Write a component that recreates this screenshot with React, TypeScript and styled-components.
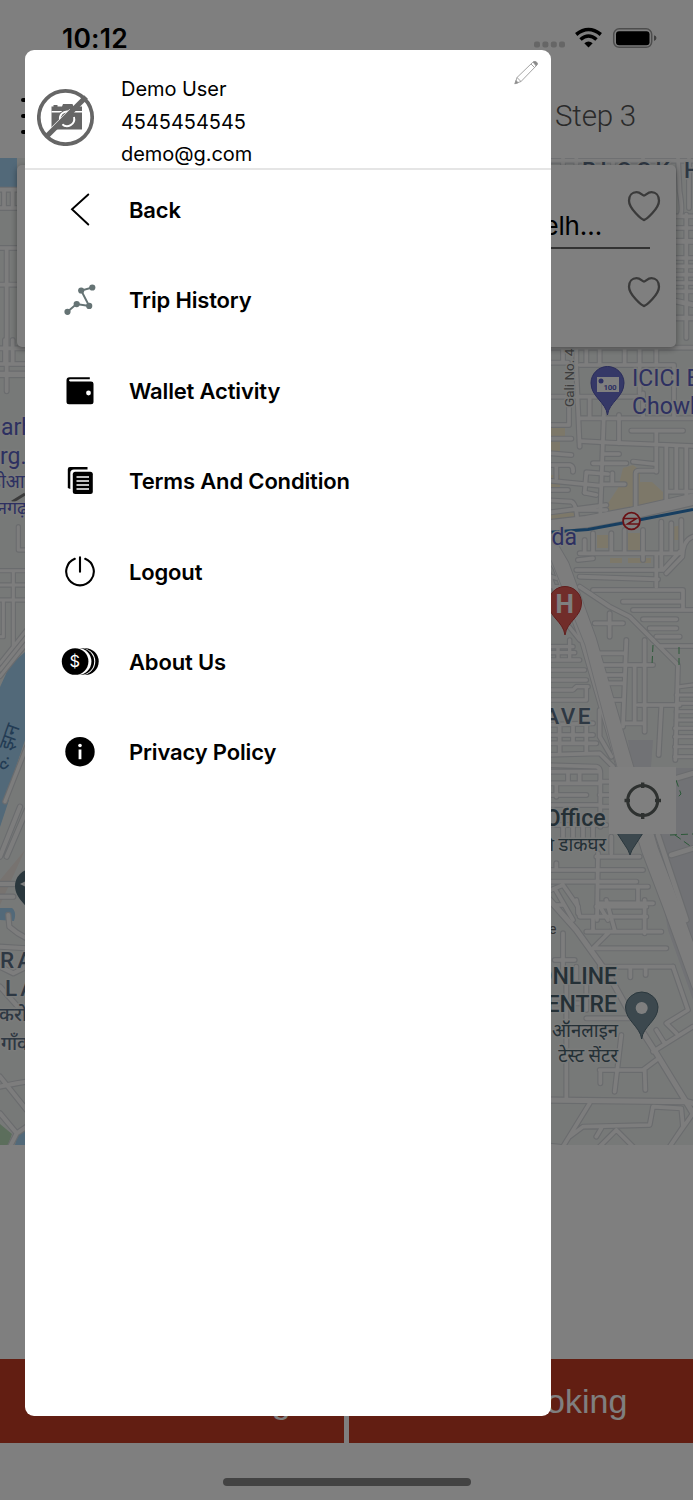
import React, { useState } from 'react';
import styled, { createGlobalStyle } from 'styled-components';

const GlobalStyle = createGlobalStyle`
  * {
    box-sizing: border-box;
  }

  body {
    margin: 0;
    background: #fff;
    font-family: Inter, 'Noto Sans', sans-serif;
  }
`;

const Screen = styled.div`
  position: relative;
  width: 693px;
  height: 1500px;
  display: flex;
  flex-direction: column;
  overflow: hidden;
  background: #fff;
`;

const StatusBar = styled.div`
  height: 75px;
  padding: 0 36px 0 62px;
  display: flex;
  align-items: center;
  justify-content: space-between;
  flex-shrink: 0;
`;

const Clock = styled.div`
  padding-top: 1px;
  font-size: 26.5px;
  font-weight: 600;
  line-height: 30px;
  letter-spacing: 0.2px;
  color: #000;
`;

const TopBar = styled.div`
  height: 82px;
  margin-bottom: 1px;
  padding: 0 57px 0 21px;
  display: flex;
  align-items: center;
  justify-content: space-between;
  flex-shrink: 0;
`;

const MenuButton = styled.button`
  width: 38px;
  height: 36px;
  padding: 0;
  border: none;
  background: none;
  display: flex;
  flex-direction: column;
  justify-content: space-between;

  span {
    width: 38px;
    height: 4px;
    border-radius: 2px;
    background: #000;
  }
`;

const StepTitle = styled.div`
  font-family: Roboto, sans-serif;
  font-size: 29.5px;
  font-weight: 300;
  letter-spacing: -0.2px;
  color: #555;
`;

const MapArea = styled.div`
  position: relative;
  height: 987px;
  flex-shrink: 0;

  > svg {
    display: block;
  }
`;

const LocationCard = styled.div`
  position: absolute;
  top: 7px;
  left: 17px;
  width: 659px;
  height: 182px;
  padding: 0 15px 0 24px;
  border-radius: 5px;
  background: #fff;
  box-shadow: 0 2px 6px rgba(0, 0, 0, 0.4);
`;

const LocationRow = styled.div<{ $line?: boolean }>`
  height: ${(p) => (p.$line ? '84px' : '89px')};
  display: flex;
  align-items: center;
  justify-content: space-between;
`;

const LocationField = styled.div<{ $line?: boolean }>`
  width: 610px;
  height: 100%;
  display: flex;
  align-items: flex-end;
  justify-content: flex-end;
  padding: 0 48px 6px 0;
  border-bottom: ${(p) => (p.$line ? '2px solid #666' : 'none')};
  font-size: 26px;
  line-height: 31px;
  letter-spacing: -0.2px;
  color: #000;
`;

const HeartSlot = styled.div`
  width: 34px;
  margin-left: -23px;
  margin-bottom: 3px;
  display: flex;
  flex-shrink: 0;
`;

const LocateButton = styled.button`
  position: absolute;
  top: 609px;
  left: 609px;
  width: 67px;
  height: 67px;
  padding: 0;
  border: none;
  background: #fff;
  display: flex;
  align-items: center;
  justify-content: center;
`;

const Spacer = styled.div`
  flex: 1;
`;

const BookingBar = styled.div`
  height: 84px;
  display: grid;
  grid-template-columns: 344px 344px;
  gap: 5px;
  flex-shrink: 0;
`;

const BookingButton = styled.button`
  border: none;
  padding: 0 0 0 3px;
  background: #c43c24;
  color: #fff;
  font-family: 'Liberation Sans', Arial, sans-serif;
  font-size: 34px;
`;

const HomeArea = styled.div`
  height: 57px;
  padding-top: 35px;
  display: flex;
  justify-content: center;
  flex-shrink: 0;
`;

const HomeIndicator = styled.div`
  width: 248px;
  height: 8px;
  border-radius: 4px;
  background: #868686;
`;

const Overlay = styled.div`
  position: absolute;
  inset: 0;
  padding: 50px 0 84px 25px;
  display: flex;
  background: rgba(0, 0, 0, 0.5);
`;

const Drawer = styled.div`
  width: 526px;
  height: 1366px;
  border-radius: 9px;
  background: #fff;
  display: flex;
  flex-direction: column;
  overflow: hidden;
`;

const Profile = styled.div`
  height: 120px;
  padding: 0 12px;
  display: flex;
  border-bottom: 2px solid #e5e5e5;
`;

const Avatar = styled.div`
  width: 58px;
  margin: 38px 25px 0 0;
`;

const ProfileInfo = styled.div`
  flex: 1;
  padding: 23px 0 0 1px;
`;

const ProfileLine = styled.div`
  height: 32.5px;
  font-size: 20px;
  line-height: 33px;
  letter-spacing: -0.05px;
  color: #000;
`;

const EditButton = styled.button`
  width: 26px;
  height: 26px;
  margin-top: 9px;
  padding: 0;
  border: none;
  background: none;
`;

const MenuList = styled.nav`
  padding: 10px 0 0 34px;
  display: flex;
  flex-direction: column;
  gap: 30.4px;
`;

const MenuRow = styled.button`
  height: 60px;
  padding: 0;
  border: none;
  background: none;
  display: flex;
  align-items: center;
  gap: 28px;
  cursor: pointer;
`;

const MenuIcon = styled.span`
  width: 42px;
  height: 40px;
  display: flex;
  align-items: center;
  justify-content: center;
`;

const MenuLabel = styled.span`
  font-family: Inter, sans-serif;
  font-size: 22px;
  font-weight: 600;
  letter-spacing: -0.16px;
  color: #000;
`;

type Road = [string, number?];
type Tile = { x: number; y: number; roads: Road[] };

// roads are grouped in tiles, three units to the pixel
const tiles: Tile[] = [
  {
    x: 543,
    y: 158,
    roads: [
      ['M0 8H450M60 0V30M210 8V30M100 0V30M300 0V30'],
      ['M405 0L410 100Q420 160 412 170M438 0V150M400 175H450M400 210H450M400 300H450M400 325H450M400 350H450M400 375H450M400 400H450M430 170V540', 11],
      ['M400 250H450M400 430L450 440M400 480H450', 14],
    ],
  },
  {
    x: 543,
    y: 340,
    roads: [
      ['M20 23H450M100 0V90L110 320M130 20V70M170 20V75M0 68H75M110 75H393M245 20V75M290 20V160M340 20V75M393 75V230M60 20V68'],
      ['M78 180V255H0M0 170H300M185 160L172 520M228 225V310M110 235H450M265 272H420M0 296H85M0 338L85 345M140 170V235M300 160V235'],
      ['M110 303L200 308L450 318M340 275V395M180 342H228M150 370H250M0 375H80Q92 378 90 395M270 365L335 372M40 375V415'],
      ['M125 458L130 397L195 402M208 400V430M180 433H245M278 520V400Q278 392 290 392H340M370 320V490M400 320V455M430 320V480M370 455H450'],
      ['M0 420L170 437M0 450H75M0 480L85 485Q100 490 103 540M125 458L160 465M103 510H190M0 520L190 495'],
      ['M0 560L130 545L265 520L450 478', 34],
      ['M150 580V640M125 600V640M105 660L150 655M205 580V640M245 570V640M300 570V660M355 545V690M385 550V640M415 540V630L360 690H340M100 690H345M110 710L345 718M110 640H410M340 640V740'],
      ['M450 590Q420 600 418 650L370 700M420 750V810H450M110 740L200 800L260 830L330 900M150 750H420M240 785H420M270 810H440M300 838H400M320 865H400M340 890H410M155 850H240M200 820V890'],
      ['M0 740H60M0 700L40 715M0 650L70 850L110 900', 10],
    ],
  },
  {
    x: 543,
    y: 640,
    roads: [
      ['M0 20H90M0 38H95M0 60H110M0 90H125M0 120H130M0 150H90L100 140H135M0 180H130V140M80 0V60M45 20V60', 10],
      ['M160 40H245M180 75H330M190 105H245M195 130H240M250 0L240 260M210 180H240M275 80V250M305 0V275M285 195H410M240 250H305M330 0L405 75L397 360M355 200L347 345M350 18H450'],
      ['M410 140L450 135M400 165H450M405 190H450M400 215H450M400 240H450M395 265H450M395 290H450M395 320H450M395 350H450', 9],
      ['M0 255L150 250M0 285H150M0 310H160M0 345L170 340L210 380M50 260V340M90 260V310M130 255V340M170 210V290L205 350'],
      ['M0 375L160 380Q172 382 172 400V560M0 395H165M75 400V425M110 400V430M0 430H170M0 465H130M40 430V470M0 495H165M170 425H200M170 465H200M172 500H200'],
      ['M0 555H190M60 555V600M90 555V600M120 555V600M150 555V600M205 590V640M165 640L162 840M0 690H300M0 725H280M35 745L90 840M60 735L105 800V820M160 650H290M165 740H315M165 790H330M285 740V790M40 670V690M0 760L60 735M165 790L195 840'],
      ['M400 415L450 400M385 645L450 625', 14],
      ['M345 585L430 840', 14],
    ],
  },
  {
    x: 543,
    y: 900,
    roads: [
      ['M20 0L100 90L200 230L250 320L340 460L450 640', 15],
      ['M35 15H60M100 0L110 50H310M150 50V95M190 0L215 90M130 95H355M150 145H370M200 95L145 150M170 200H390M262 205V232M308 205V225M305 0V100M160 20H310'],
      ['M390 200L435 330L370 370L400 400M340 390L365 430M330 455L450 380M35 180H95M60 100V230M100 200V240'],
      ['M70 230V600M130 355H260M130 230V330M170 510H300L340 480M172 510V550M235 405L215 575M305 510L307 570M30 310H130'],
      ['M0 600L430 605L450 610', 15],
      ['M140 610L60 740M80 710L120 680L320 675L330 620L415 625L420 680L380 740M220 690L270 740M160 710L175 685M170 740L220 690M0 735L50 740M450 640L380 740'],
    ],
  },
  {
    x: 0,
    y: 158,
    roads: [['M0 95H80M0 150H80M12 100V150M38 100V150M0 270H80M20 270V700M0 380H80']],
  },
  {
    x: 0,
    y: 340,
    roads: [
      ['M15 0V70M38 0V70M0 72H80M0 25H80'],
      ['M0 103H80', 16],
      ['M55 560V630H80M0 692H80M0 735H80M0 780H80M40 692V920M10 780V890H0M0 970L80 870M0 990L80 890M0 1010L80 910', 9],
      ['M15 1385L80 1220', 10],
    ],
  },
  {
    x: 0,
    y: 800,
    roads: [
      ['M0 170L60 20M20 170L80 30M0 252H80M0 290H40', 12],
      ['M25 345L28 380Q50 400 80 415M0 440L80 445M0 500L40 520L80 500M0 560L80 650M0 860L50 850L80 845M0 830L80 930M0 940L50 1000L80 980M30 1040L50 1000', 12],
    ],
  },
];

const CityMap: React.FC = () => (
  <svg width="693" height="987" viewBox="0 158 693 987">
    <rect y="158" width="693" height="987" fill="#eff3f1" />
    <g fill="#e2e4ea">
      <path d="M628 740H653L651 768H632ZM676 768H693V835H652L688 960H693V1000L668 930L650 830Z" />
      <path d="M656 834H693V945Z" />
    </g>
    <g fill="#fbf0d2">
      <path d="M603 511L618 488L623 468L633 465L640 470V510L625 513ZM640 482H652L663 492V505L640 508ZM551 428H565V440H551ZM551 440H560V455H551ZM551 475H560V490H551ZM551 512H575V519L551 522ZM597 535H608V548H597ZM628 533H640V550H628ZM628 558H651V563H628ZM610 558H622V563H610ZM672 527L682 525V540H672ZM685 502H693V495H685Z" />
    </g>
    <path d="M25 850L0 905V880Z" fill="#eee6e0" />
    <g fill="#a4d2f2">
      <path d="M0 158H17V187H0ZM25 652L10 665L0 687V800H5L25 740ZM0 800H9L0 827ZM0 908H12Q17 912 14 921L0 920ZM18 1130L25 1127V1145H15Z" />
    </g>
    <path d="M0 1124L12 1134L8 1145H0Z" fill="#b8dcb8" />

    <g fill="none" stroke="#d5d8dc" strokeLinejoin="round" strokeLinecap="round">
      {tiles.map((t) => (
        <g key={`${t.x}-${t.y}`} transform={`translate(${t.x} ${t.y}) scale(0.3333)`}>
          {t.roads.map(([d, w = 11], i) => (
            <path key={i} d={d} strokeWidth={w + 7} />
          ))}
        </g>
      ))}
      <path d="M540 530L561 566L588 640L625 767L650 850L671 905L700 985" strokeWidth="18" />
    </g>
    <g fill="none" stroke="#fbfbfb" strokeLinejoin="round" strokeLinecap="round">
      {tiles.map((t) => (
        <g key={`${t.x}-${t.y}`} transform={`translate(${t.x} ${t.y}) scale(0.3333)`}>
          {t.roads.map(([d, w = 11], i) => (
            <path key={i} d={d} strokeWidth={w} />
          ))}
        </g>
      ))}
      <path d="M540 530L561 566L588 640L625 767L650 850L671 905L700 985" strokeWidth="16" />
    </g>
    <path d="M551 560L585 645L617 767" fill="none" stroke="#dcdee2" strokeWidth="1" />

    <g fill="none" stroke="#58b070" strokeWidth="1" strokeDasharray="7 4">
      <path d="M653 645L652 665M679 647V667M676 780L681 794L675 800M670 835L693 834M675 835L693 848" />
    </g>
    <path d="M540 533L588 529.5L631 521.500L693 509.500" fill="none" stroke="#2e7cc0" strokeWidth="3" />
    <path d="M12 502L25 494" stroke="#777" strokeWidth="3" />

    {/* metro stop */}
    <circle cx="631.5" cy="521" r="8.400" fill="#fff" stroke="#d2232a" strokeWidth="1.800" />
    <path d="M624 518.500H636.500L627.500 524H639" fill="none" stroke="#d2232a" strokeWidth="1.500" />

    {/* bank pin */}
    <path d="M607.500 415C606 402 591 397 591 383A16.500 16.500 0 0 1 624 383C624 397 609 402 607.500 415Z" fill="#6b70cf" stroke="#5257b4" />
    <rect x="597" y="377" width="22" height="15" fill="#fff" />
    <circle cx="601" cy="381" r="2.500" fill="#5a60c4" />
    <text x="603.500" y="389.500" fontFamily="Roboto" fontSize="8" fontWeight="700" letterSpacing="-0.300" fill="#5a60c4">100</text>

    {/* hospital pin */}
    <path d="M565 635C563 621 548.500 617 548.500 603A16.500 16.500 0 0 1 581.500 603C581.500 617 567 621 565 635Z" fill="#e35a55" stroke="#c23b38" />
    <text x="564.800" y="613" textAnchor="middle" fontFamily="Roboto" fontSize="26" fontWeight="700" fill="#fff">H</text>

    {/* grey place pins */}
    <path d="M617 833H643L632 850L630 855L628 850Z" fill="#78909c" stroke="#546e7a" />
    <path d="M641.700 1039C640 1026 625.500 1021 625.500 1007A16.300 16.300 0 0 1 658 1007C658 1021 643 1026 641.700 1039Z" fill="#78909c" stroke="#546e7a" />
    <circle cx="641.700" cy="1008" r="6" fill="#fff" />
    <path d="M32 919C30 905 15 900 15 886A17 17 0 0 1 49 886C49 900 34 905 32 919Z" fill="#546e7a" />
    <path d="M20 884L28 880V888Z" fill="#fff" />

    <g fontFamily="Roboto, 'Noto Sans', sans-serif" stroke="#f4f6f5" strokeWidth="3" paintOrder="stroke" strokeLinejoin="round">
      <g fill="#5d7086" fontSize="22.500" fontWeight="500">
        <text x="582" y="178" letterSpacing="4.400">BLOCK H</text>
        <text x="593" y="724" textAnchor="end" letterSpacing="2.500">AVE</text>
        <text x="0" y="968" letterSpacing="3">RAM</text>
        <text x="5" y="996" letterSpacing="3">LAL</text>
        <text x="-1" y="1021" fontSize="19">करो</text>
        <text x="1" y="1050" fontSize="19">गाँव</text>
      </g>
      <g fill="#5a61c2" fontSize="23">
        <text x="632" y="386">ICICI Bank</text>
        <text x="632" y="414">Chowk</text>
        <text x="577" y="545" textAnchor="end">Noida</text>
        <text x="1" y="435">arh</text>
        <text x="0" y="464">rg.</text>
        <text x="-9" y="488" fontSize="18.500">डीआ</text>
        <text x="-3" y="514" fontSize="18">नगढ़</text>
      </g>
      <g fill="#48606c" fontSize="23" fontWeight="500">
        <text x="605.500" y="826" textAnchor="end">Post Office</text>
        <text x="606" y="851" textAnchor="end" fontSize="18.500" fontWeight="400">की डाकघर</text>
        <text x="617" y="984" textAnchor="end">ONLINE</text>
        <text x="617" y="1012" textAnchor="end">CENTRE</text>
        <text x="618" y="1037" textAnchor="end" fontSize="18.500" fontWeight="400">ऑनलाइन</text>
        <text x="618" y="1062" textAnchor="end" fontSize="18.500" fontWeight="400">टेस्ट सेंटर</text>
      </g>
      <text x="549" y="934" fontSize="14" fill="#666">e</text>
      <text transform="translate(573.500 407) rotate(-90)" fontSize="13.500" fill="#7a7a7a">Gali No. 4</text>
      <text transform="translate(4 771) rotate(-70)" fontSize="20" fill="#4678a8" stroke="none">हं. झन</text>
    </g>
  </svg>
);

const StatusIcons = () => (
  <svg width="124" height="26" viewBox="0 0 124 26">
    <g fill="#ccc">
      <rect x="1" y="16.500" width="6" height="6" rx="2" />
      <rect x="9.400" y="16.500" width="6" height="6" rx="2" />
      <rect x="17.800" y="16.500" width="6" height="6" rx="2" />
      <rect x="26" y="16.500" width="6" height="6" rx="2" />
    </g>
    <g fill="none" stroke="#000" strokeWidth="3.600">
      <path d="M43.200 9.500Q55.500 -0.500 67.800 9.500" />
      <path d="M47.500 14.500Q55.500 7.500 63.500 14.500" />
    </g>
    <path d="M51.300 18.300Q55.500 14.500 59.700 18.300L55.500 22.500Z" />
    <rect x="80.700" y="3.800" width="38" height="18.500" rx="5.500" fill="none" stroke="#9a9a9a" strokeWidth="1.500" />
    <rect x="83" y="6.200" width="33.500" height="14" rx="3" />
    <path d="M121 10.200Q123.500 11 123.500 13T121 16Z" fill="#808080" />
  </svg>
);

const Heart = () => (
  <svg width="34" height="32" viewBox="0 0 34 32">
    <path
      d="M17 30C14.500 29.500 2 18.500 2 10.800C2 5.500 5.200 2.200 9.500 2.200C13.500 2.200 15.300 5.500 17 5.500S20.500 2.200 24.500 2.200C28.800 2.200 32 5.500 32 10.800C32 18.500 19.500 29.500 17 30Z"
      fill="none"
      stroke="#757575"
      strokeWidth="2.300"
      strokeLinejoin="round"
    />
  </svg>
);

const Crosshair = () => (
  <svg width="38" height="38" viewBox="0 0 38 38" fill="none" stroke="#5c6360">
    <circle cx="18.700" cy="18.500" r="15" strokeWidth="3" />
    <path d="M18.700 0.500V6M18.700 31V37M0.500 18.500H6M31 18.500H37" strokeWidth="3.400" />
  </svg>
);

const NoPhoto = () => (
  <svg width="58" height="58" viewBox="0 0 58 58">
    <path d="M16.500 18.500V17H20.500V18.500H25L26 16H35.500L36.500 18.500H45V41.500H14.500V18.500Z" fill="#666" />
    <path d="M14.500 23.700H45" stroke="#fff" strokeWidth="1.500" />
    <circle cx="30" cy="30.500" r="9" fill="#666" />
    <path d="M37 29A7.200 7.200 0 0 1 25 36M23 32A7.200 7.200 0 0 1 31 23.500" fill="none" stroke="#fff" strokeWidth="1.900" />
    <path d="M12 42.500L33 21.500" stroke="#fff" strokeWidth="1.300" />
    <path d="M9 49L49 9" stroke="#666" strokeWidth="5.300" />
    <circle cx="28.500" cy="29.500" r="26.700" fill="none" stroke="#666" strokeWidth="3.700" />
  </svg>
);

const Pencil = () => (
  <svg width="26" height="26" viewBox="0 0 26 26" fill="none" stroke="#999" strokeWidth="0.900">
    <path d="M2.200 24.500L4 18.500L19.500 3.500Q21.500 1.800 23.200 3.200T23.500 6.500L8 22.500ZM4 18.500L8 22.500M18 5L21.500 8.500" />
    <path d="M20 3Q22 1.800 23.700 3.200T23.200 7Z" fill="#888" />
    <path d="M1.800 24.800L3 21.500L5.200 23.800Z" fill="#888" />
  </svg>
);

const BackIcon = () => (
  <svg width="36" height="36" viewBox="0 0 36 36">
    <path d="M26.300 2.500L10 17.300L26.300 32.500" fill="none" stroke="#000" strokeWidth="1.900" strokeLinecap="round" />
  </svg>
);

const TripIcon = () => (
  <svg width="32" height="32" viewBox="0 0 32 32" fill="#657374">
    <path d="M3.500 27.800L12.500 20L25.200 22L17.200 6.500L28.300 3.500" fill="none" stroke="#657374" strokeWidth="1.900" />
    <circle cx="3.500" cy="27.800" r="3.100" />
    <circle cx="12.700" cy="20.100" r="3.100" />
    <circle cx="25.200" cy="21.900" r="3.100" />
    <circle cx="17.200" cy="6.500" r="3.100" />
    <circle cx="28.300" cy="3.500" r="3.100" />
  </svg>
);

const WalletIcon = () => (
  <svg width="30" height="30" viewBox="0 0 30 30">
    <path d="M24.800 1.200V3.200H5.200Q4 3.200 4 4.200T5.200 5.400H26Q28.500 5.400 28.500 7.700V25.700Q28.500 28.200 26 28.200H4Q1.500 28.200 1.500 25.700V4.200Q1.500 1.200 4.500 1.200Z" />
    <circle cx="23.500" cy="17" r="2.400" fill="#fff" />
  </svg>
);

const TermsIcon = () => (
  <svg width="30" height="30" viewBox="0 0 30 30">
    <path d="M22.500 1H5Q2.800 1 2.800 3.200V22L5.300 23V7Q5.300 3.400 9 3.400H22.500Z" />
    <rect x="7.800" y="5.700" width="20" height="22.300" rx="2.500" />
    <path d="M11.500 11H24M11.500 15H24M11.500 19H24M11.500 23H24" stroke="#fff" strokeWidth="1.600" />
  </svg>
);

const PowerIcon = () => (
  <svg width="32" height="32" viewBox="0 0 32 32" fill="none" stroke="#000" strokeWidth="2.100" strokeLinecap="round">
    <path d="M10.800 2.800A13.800 13.800 0 1 0 21.200 2.800M16 1.200V15.800" />
  </svg>
);

const CoinsIcon = () => (
  <svg width="38" height="28" viewBox="0 0 38 28">
    <circle cx="24.400" cy="13.500" r="13.300" />
    <circle cx="21" cy="13.500" r="13.300" fill="#fff" />
    <circle cx="20" cy="13.500" r="13.200" />
    <circle cx="17" cy="13.500" r="13.400" fill="#fff" />
    <circle cx="14.100" cy="13.500" r="13.300" />
    <text x="13.900" y="19.300" textAnchor="middle" fontFamily="Inter" fontSize="16.500" fill="#fff">$</text>
  </svg>
);

const InfoIcon = () => (
  <svg width="30" height="30" viewBox="0 0 30 30">
    <circle cx="15" cy="14.700" r="14.700" />
    <circle cx="15" cy="8.500" r="1.800" fill="#fff" />
    <path d="M13.600 12.500H16.400V22.200H13.600Z" fill="#fff" />
  </svg>
);

const menuItems = [
  { label: 'Back', icon: <BackIcon /> },
  { label: 'Trip History', icon: <TripIcon /> },
  { label: 'Wallet Activity', icon: <WalletIcon /> },
  { label: 'Terms And Condition', icon: <TermsIcon /> },
  { label: 'Logout', icon: <PowerIcon /> },
  { label: 'About Us', icon: <CoinsIcon /> },
  { label: 'Privacy Policy', icon: <InfoIcon /> }
];

const App: React.FC = () => {
  const [open, setOpen] = useState(true);

  return (
    <>
      <GlobalStyle />
      <Screen>
        <StatusBar>
          <Clock>10:12</Clock>
          <StatusIcons />
        </StatusBar>
        <TopBar>
          <MenuButton onClick={() => setOpen(true)}>
            <span />
            <span />
            <span />
          </MenuButton>
          <StepTitle>Step 3</StepTitle>
        </TopBar>
        <MapArea>
          <CityMap />
          <LocationCard>
            <LocationRow $line>
              <LocationField $line>New Delh…</LocationField>
              <HeartSlot>
                <Heart />
              </HeartSlot>
            </LocationRow>
            <LocationRow>
              <LocationField />
              <HeartSlot>
                <Heart />
              </HeartSlot>
            </LocationRow>
          </LocationCard>
          <LocateButton>
            <Crosshair />
          </LocateButton>
        </MapArea>
        <Spacer />
        <BookingBar>
          <BookingButton>Instant Booking</BookingButton>
          <BookingButton>Later Booking</BookingButton>
        </BookingBar>
        <HomeArea>
          <HomeIndicator />
        </HomeArea>

        {open && (
          <Overlay onClick={() => setOpen(false)}>
            <Drawer onClick={(e) => e.stopPropagation()}>
              <Profile>
                <Avatar>
                  <NoPhoto />
                </Avatar>
                <ProfileInfo>
                  <ProfileLine>Demo User</ProfileLine>
                  <ProfileLine>4545454545</ProfileLine>
                  <ProfileLine>demo@g.com</ProfileLine>
                </ProfileInfo>
                <EditButton>
                  <Pencil />
                </EditButton>
              </Profile>
              <MenuList>
                {menuItems.map((item) => (
                  <MenuRow key={item.label}>
                    <MenuIcon>{item.icon}</MenuIcon>
                    <MenuLabel>{item.label}</MenuLabel>
                  </MenuRow>
                ))}
              </MenuList>
            </Drawer>
          </Overlay>
        )}
      </Screen>
    </>
  );
};

export default App;
